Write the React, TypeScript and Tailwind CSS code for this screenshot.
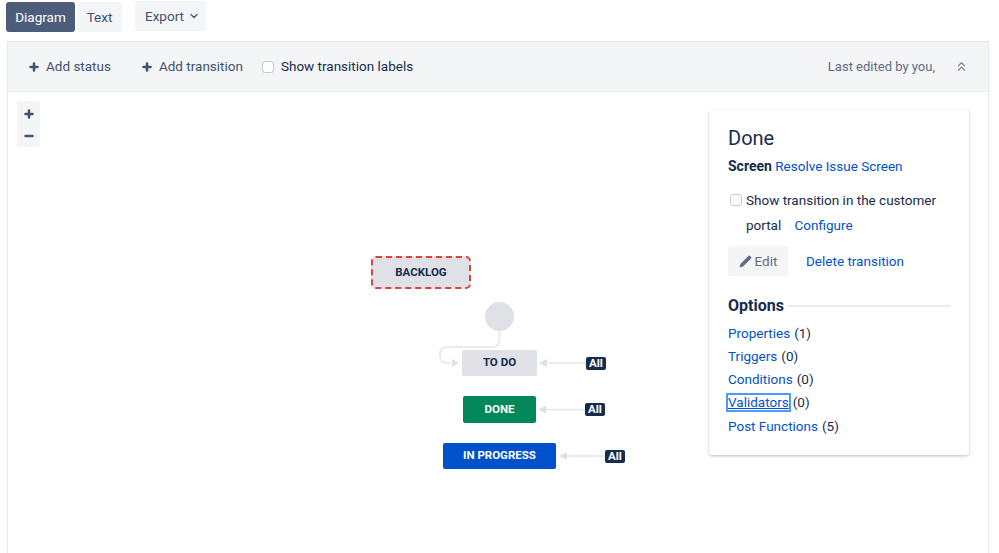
import React from 'react';
import { ChevronDown, ChevronsUp, Minus, Pencil, Plus } from 'lucide-react';

const links = [
  { name: 'Properties', count: 1 },
  { name: 'Triggers', count: 0 },
  { name: 'Conditions', count: 0 },
  { name: 'Validators', count: 0, focused: true },
  { name: 'Post Functions', count: 5 },
];

const Checkbox: React.FC<{ className?: string }> = ({ className }) => (
  <span className={`inline-block w-[12px] h-[12px] shrink-0 rounded-[3px] border border-[#c4c7cc] bg-white ${className ?? ''}`} />
);

const AllBadge: React.FC<{ className: string }> = ({ className }) => (
  <div className={`absolute w-[20px] h-[13px] flex items-center justify-center rounded-[2px] bg-[#172b4d] text-white text-[11.5px] font-bold leading-none ${className}`}>
    All
  </div>
);

const App: React.FC = () => {
  return (
    <div className="w-[999px] h-[553px] overflow-hidden bg-white text-[#172b4d] text-[13.5px] font-['Roboto',sans-serif]">
      {/* tabs */}
      <div className="flex items-start pl-[6px] pt-[2px] h-[41px]">
        <div className="w-[69px] h-[30px] flex items-center justify-center rounded-[3px] bg-[#4c5d7c] text-white">Diagram</div>
        <div className="w-[45px] h-[30px] ml-[2px] flex items-center justify-center rounded-[3px] bg-[#f4f5f7] text-[#42526e]">Text</div>
        <div className="w-[71px] h-[30px] ml-[13px] -mt-[1px] flex items-center pl-[10px] gap-[4px] rounded-[3px] bg-[#f4f5f7] text-[#42526e]">
          Export
          <ChevronDown size={12} strokeWidth={2.5} />
        </div>
      </div>

      <div className="ml-[7px] w-[982px] h-[520px] border border-[#e6e7ea]">
        {/* toolbar */}
        <div className="h-[50px] flex items-center bg-[#f4f5f7] border-b border-[#ebecf0] text-[#42526e]">
          <div className="flex items-center ml-[20px] gap-[6px]">
            <Plus size={12} strokeWidth={5} />
            Add status
          </div>
          <div className="flex items-center ml-[30px] gap-[6px]">
            <Plus size={12} strokeWidth={5} />
            Add transition
          </div>
          <div className="flex items-center ml-[19px] gap-[7px] text-[#172b4d]">
            <Checkbox />
            Show transition labels
          </div>
          <div className="ml-auto text-[13px] text-[#5e6c84]">Last edited by you,</div>
          <ChevronsUp size={15} strokeWidth={2} className="ml-[19px] mr-[19px] text-[#7a8699]" />
        </div>

        {/* canvas */}
        <div className="relative h-[469px]">
          <div className="absolute left-[9px] top-[9px] w-[23px] h-[46px] pt-[2px] flex flex-col items-center justify-center gap-[10px] rounded-[3px] bg-[#f4f5f7] text-[#42526e]">
            <Plus size={12} strokeWidth={5} />
            <Minus size={12} strokeWidth={5} />
          </div>

          {/* connectors */}
          <svg className="absolute left-0 top-0" width="700" height="400" fill="none" stroke="#e3e5ea" strokeWidth="1.5">
            <path d="M491.5 236 V247 Q491.5 255 484 255 H440 Q432 255 432 262 V264 Q432 271 440 271 H443" />
            <path d="M451 271 L444 267 V275 Z" fill="#dfe1e6" stroke="none" />
            <path d="M578 271 H540" />
            <path d="M531 271 L539 267 V275 Z" fill="#dfe1e6" stroke="none" />
            <path d="M577 317.5 H538" />
            <path d="M530 317.5 L538 313.5 V321.5 Z" fill="#dfe1e6" stroke="none" />
            <path d="M597 364 H559" />
            <path d="M551 364 L559 360 V368 Z" fill="#dfe1e6" stroke="none" />
          </svg>

          {/* nodes */}
          <div className="absolute left-[363px] top-[164px] w-[100px] h-[33px] flex items-center justify-center rounded-[5px] border-2 border-dashed border-[#d9443a] bg-[#dfe1e6] text-[11.5px] font-bold">
            BACKLOG
          </div>
          <div className="absolute left-[477px] top-[210px] w-[29px] h-[29px] rounded-full bg-[#dfe1e6]" />
          <div className="absolute left-[454px] top-[258px] w-[75px] h-[26px] flex items-center justify-center rounded-[2px] bg-[#dfe1e6] text-[11.5px] font-bold">
            TO DO
          </div>
          <div className="absolute left-[455px] top-[304px] w-[73px] h-[27px] flex items-center justify-center rounded-[2px] bg-[#00875a] text-white text-[11.5px] font-bold">
            DONE
          </div>
          <div className="absolute left-[435px] top-[351px] w-[113px] h-[26px] flex items-center justify-center rounded-[2px] bg-[#0052cc] text-white text-[11.5px] font-bold">
            IN PROGRESS
          </div>
          <AllBadge className="left-[578px] top-[265px]" />
          <AllBadge className="left-[577px] top-[311px]" />
          <AllBadge className="left-[597px] top-[358px]" />

          {/* side card */}
          <div className="absolute left-[701px] top-[18px] w-[260px] h-[345px] rounded-[3px] bg-white shadow-[0_1px_3px_rgba(9,30,66,0.28)] pl-[19px] pr-[19px] pt-[16px]">
            <div className="text-[20px] leading-[24px] text-[#172b4d]">Done</div>
            <div className="mt-[6px] leading-[20px]">
              <span className="font-bold text-[14px]">Screen</span> <span className="text-[#0052cc]">Resolve Issue Screen</span>
            </div>
            <div className="mt-[12px] flex items-start">
              <Checkbox className="mt-[6px] ml-[2px]" />
              <div className="ml-[4px] leading-[24.5px]">
                Show transition in the customer
                <br />
                portal <span className="ml-[10px] text-[#0052cc]">Configure</span>
              </div>
            </div>
            <div className="mt-[9px] flex items-center">
              <div className="w-[60px] h-[30px] flex items-center justify-center gap-[3px] rounded-[3px] bg-[#f4f5f7] text-[#5e6c84]">
                <Pencil size={13} fill="#5e6c84" strokeWidth={1.5} />
                Edit
              </div>
              <span className="ml-[18px] text-[#0052cc]">Delete transition</span>
            </div>
            <div className="mt-[20px] flex items-center">
              <span className="text-[16px] leading-[20px] font-bold">Options</span>
              <div className="flex-1 ml-[3px] h-[2px] bg-[#ebecf0]" />
            </div>
            <div className="mt-[5px] flex flex-col">
              {links.map((link) => (
                <div key={link.name} className="h-[23.3px] flex items-center">
                  <span className={link.focused ? 'inline-block leading-[15px] text-[#0052cc] underline outline-2 outline-[#4c9aff]' : 'text-[#0052cc]'}>{link.name}</span>
                  <span className="ml-[4px]">({link.count})</span>
                </div>
              ))}
            </div>
          </div>
        </div>
      </div>
    </div>
  );
};

export default App;
